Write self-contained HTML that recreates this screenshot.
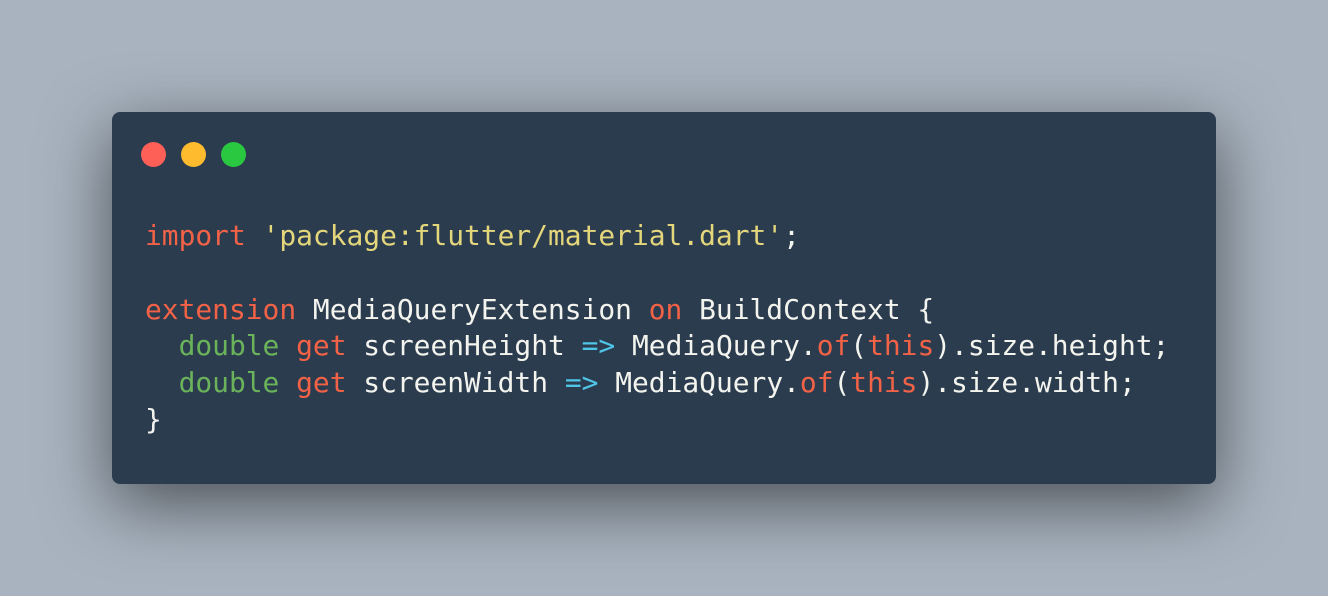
<!DOCTYPE html>
<html><head><style>
html,body{margin:0;padding:0;}
body{width:1328px;height:596px;background:#a8b3bf;position:relative;overflow:hidden;}
.win{position:absolute;left:112px;top:112px;width:1104px;height:372px;background:#2b3c4f;border-radius:8px;box-shadow:0 20px 68px rgba(0,0,0,0.55);}
.dot{position:absolute;top:30px;width:25px;height:25px;border-radius:50%;}
pre{position:absolute;left:33px;top:106px;margin:0;font-family:"DejaVu Sans Mono","Liberation Mono",monospace;font-size:27.9px;line-height:36.8px;color:#f4f4ef;}
.k{color:#f26246}.s{color:#e3d67b}.g{color:#6bb35a}.c{color:#4fc6e8}
</style></head><body>
<div class="win">
<div class="dot" style="left:29px;background:#fe5f57"></div>
<div class="dot" style="left:69px;background:#febb2e"></div>
<div class="dot" style="left:109px;background:#29c840"></div>
<pre><span class="k">import</span> <span class="s">'package:flutter/material.dart'</span>;

<span class="k">extension</span> MediaQueryExtension <span class="k">on</span> BuildContext {
  <span class="g">double</span> <span class="k">get</span> screenHeight <span class="c">=&gt;</span> MediaQuery.<span class="k">of</span>(<span class="k">this</span>).size.height;
  <span class="g">double</span> <span class="k">get</span> screenWidth <span class="c">=&gt;</span> MediaQuery.<span class="k">of</span>(<span class="k">this</span>).size.width;
}</pre>
</div>
</body></html>
